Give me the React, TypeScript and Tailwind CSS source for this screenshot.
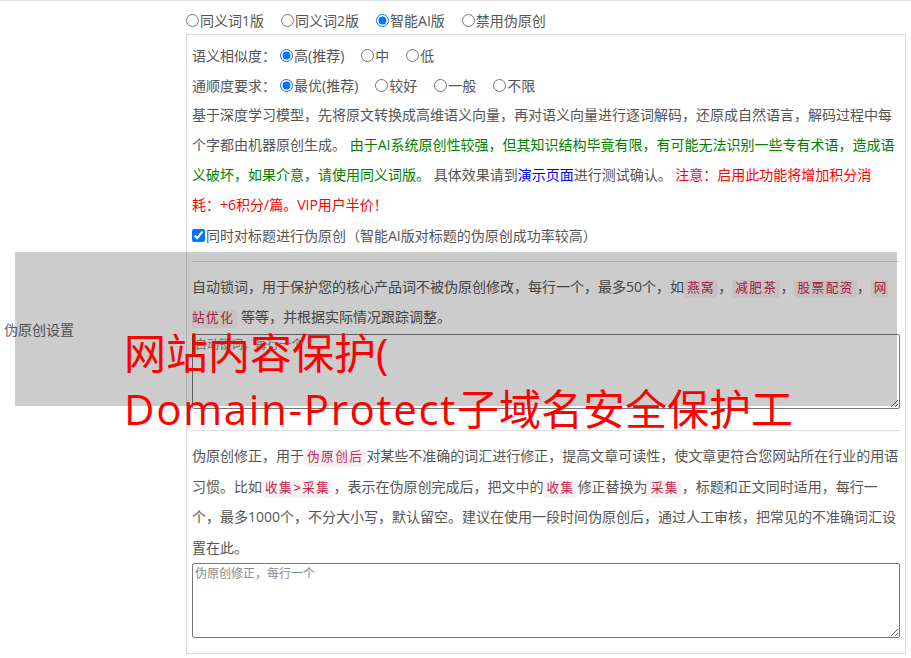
import React from "react";

const codeCls =
  "rounded-[4px] bg-[#f9f2f4] px-[3px] py-[2px] text-[12.6px] leading-[14px] tracking-[1.5px] text-[#c7254e] font-['Liberation_Mono','Noto_Sans_CJK_SC',monospace]";

function Radio({ name, label, checked }: { name: string; label: string; checked?: boolean }) {
  return (
    <label className="flex items-center ml-[4px] mr-[13px] whitespace-nowrap">
      <input
        type="radio"
        name={name}
        defaultChecked={checked}
        className="m-0 mr-[1px] w-[13px] h-[13px]"
      />
      {label}
    </label>
  );
}

export default function App() {
  return (
    <div className="relative w-[911px] h-[658px] overflow-hidden bg-white text-[14px] text-[#555] font-['Open_Sans','Noto_Sans_CJK_SC',sans-serif]">
      <div className="flex h-full border-t border-[#e0e0e0]">
        <div className="w-[186px] shrink-0 flex items-center pl-[4px] text-[#666]">伪原创设置</div>
        <div className="w-[720px] shrink-0">
          <div className="flex h-[33px] pt-[6px] leading-[22px] ml-[-4px]">
            <Radio name="ver" label="同义词1版" />
            <Radio name="ver" label="同义词2版" />
            <Radio name="ver" label="智能AI版" checked />
            <Radio name="ver" label="禁用伪原创" />
          </div>
          <div className="border border-[#ddd] px-[5px] pt-[5px] pb-[15px]">
            <div className="flex h-[30px] items-center">
              <span>语义相似度：</span>
              <Radio name="sim" label="高(推荐)" checked />
              <Radio name="sim" label="中" />
              <Radio name="sim" label="低" />
            </div>
            <div className="flex h-[30px] items-center">
              <span>通顺度要求：</span>
              <Radio name="flu" label="最优(推荐)" checked />
              <Radio name="flu" label="较好" />
              <Radio name="flu" label="一般" />
              <Radio name="flu" label="不限" />
            </div>
            <p className="leading-[30px] pr-[3px]">
              基于深度学习模型，先将原文转换成高维语义向量，再对语义向量进行逐词解码，还原成自然语言，解码过程中每个字都由机器原创生成。{" "}
              <span className="text-[#008000]">
                由于AI系统原创性较强，但其知识结构毕竟有限，有可能无法识别一些专有术语，造成语义破坏，如果介意，请使用同义词版。
              </span>{" "}
              具体效果请到<a className="text-[#0000ff]">演示页面</a>进行测试确认。{" "}
              <span className="text-[#ff0000]">注意：启用此功能将增加积分消耗：+6积分/篇。VIP用户半价！</span>
            </p>
            <label className="flex h-[30px] items-center">
              <input type="checkbox" defaultChecked className="m-0 mr-[1px] w-[13px] h-[13px]" />
              同时对标题进行伪原创（智能AI版对标题的伪原创成功率较高）
            </label>
            <div className="mt-[11px] border-t border-[#ddd]" />
            <p className="mt-[10px] leading-[30px]">
              自动锁词，用于保护您的核心产品词不被伪原创修改，每行一个，最多50个，如<code className={codeCls}>燕窝</code>，<code className={codeCls}>减肥茶</code>，<code className={codeCls}>股票配资</code>，<code className={codeCls}>网站优化</code> 等等，并根据实际情况跟踪调整。
            </p>
            <textarea
              placeholder="自动锁词，每行一个"
              className="block mt-[2px] w-full h-[75px] border border-[#767676] rounded-[2px] p-[2px] text-[12px] leading-[16px] placeholder:text-[#888]"
            />
            <div className="mt-[21px] border-t border-[#ddd]" />
            <p className="mt-[10px] leading-[30.5px]">
              伪原创修正，用于<code className={codeCls}>伪原创后</code>对某些不准确的词汇进行修正，提高文章可读性，使文章更符合您网站所在行业的用语习惯。比如<code className={codeCls}>收集&gt;采集</code>，表示在伪原创完成后，把文中的<code className={codeCls}>收集</code>修正替换为<code className={codeCls}>采集</code>，标题和正文同时适用，每行一个，最多1000个，不分大小写，默认留空。建议在使用一段时间伪原创后，通过人工审核，把常见的不准确词汇设置在此。
            </p>
            <textarea
              placeholder="伪原创修正，每行一个"
              className="block w-full h-[75px] border border-[#767676] rounded-[2px] p-[2px] text-[12px] leading-[16px] placeholder:text-[#888]"
            />
          </div>
        </div>
      </div>

      <div className="absolute left-[15px] top-[252px] w-[882px] h-[154px] bg-[rgba(0,0,0,0.2)]" />
      <div className="absolute left-[124px] top-[325px] text-[42px] leading-[56px] text-[#ff0000] whitespace-nowrap font-['Open_Sans','Noto_Sans_CJK_SC',sans-serif]">
        <div>网站内容保护(</div>
        <div>
          <span className="tracking-[1.7px]">Domain-Protect</span>子域名安全保护工
        </div>
      </div>
    </div>
  );
}
